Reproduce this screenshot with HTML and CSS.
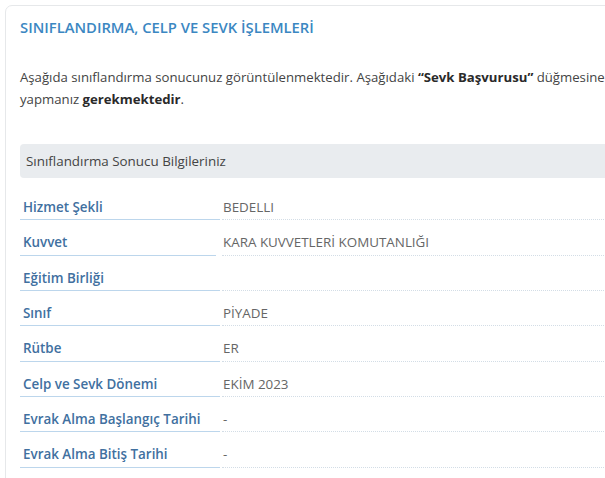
FILE: index.html
```html
<!DOCTYPE html>
<html lang="tr">
<head>
    <meta charset="UTF-8">
    <meta name="viewport" content="width=device-width, initial-scale=1.0">
    <title>Sınıflandırma, Celp ve Sevk İşlemleri</title>
    <link rel="stylesheet" href="styles.css">
</head>
<body>

    <div class="page">
        <div class="card">
            <h1 class="card-title">SINIFLANDIRMA, CELP VE SEVK İŞLEMLERİ</h1>

            <!-- Bilgilendirme metni -->
            <p class="info">
                Aşağıda sınıflandırma sonucunuz görüntülenmektedir. Aşağıdaki <strong>“Sevk Başvurusu”</strong> düğmesine tıklayarak sevk başvurunuzu<br>
                yapmanız <strong>gerekmektedir</strong>.
            </p>

            <div class="section-head">Sınıflandırma Sonucu Bilgileriniz</div>

            <!-- Sonuç tablosu -->
            <div class="result">
                <div class="label">Hizmet Şekli</div>
                <div class="value">BEDELLI</div>

                <div class="label short">Kuvvet</div>
                <div class="value">KARA KUVVETLERİ KOMUTANLIĞI</div>

                <div class="label">Eğitim Birliği</div>
                <div class="value"></div>

                <div class="label">Sınıf</div>
                <div class="value">PİYADE</div>

                <div class="label">Rütbe</div>
                <div class="value">ER</div>

                <div class="label">Celp ve Sevk Dönemi</div>
                <div class="value">EKİM 2023</div>

                <div class="label">Evrak Alma Başlangıç Tarihi</div>
                <div class="value">-</div>

                <div class="label">Evrak Alma Bitiş Tarihi</div>
                <div class="value">-</div>
            </div>
        </div>
    </div>

</body>
</html>
```

FILE: styles.css
```css
body {
    font-family: "Open Sans", Arial, sans-serif;
    background-color: #fff;
    margin: 0;
    padding: 0;
    overflow: hidden;
}

.page {
    padding: 5px 0 0 5px;
}

/* Kart utama */
.card {
    width: 900px;
    height: 600px;
    border: 1px solid #e6e8ea;
    border-radius: 7px;
    padding: 11px 14px 0 14px;
}

.card-title {
    margin: 0;
    font-size: 14.8px;
    line-height: 20px;
    font-weight: 600;
    color: #3b87c2;
}

.info {
    margin: 29px 0 34px 0;
    font-size: 13.2px;
    line-height: 22px;
    color: #444;
}

.info strong {
    font-weight: 700;
    color: #2a2a2a;
}

.section-head {
    height: 34px;
    line-height: 34px;
    padding-left: 6px;
    background-color: #e9ecef;
    border-radius: 4px;
    font-size: 13.4px;
    color: #444;
    margin-bottom: 7px;
}

/* Tabel hasil */
.result {
    display: grid;
    grid-template-columns: 200px 1fr;
    column-gap: 2px;
}

.label, .value {
    box-sizing: border-box;
    height: 35.33px;
    padding-top: 12px;
    line-height: 20px;
    font-size: 13.4px;
}

.label {
    padding-left: 3px;
    font-weight: 600;
    color: #41709f;
    border-bottom: 1px solid #bcd6ec;
}

.label.short {
    margin-right: 4px;
}

.value {
    padding-left: 1px;
    color: #666;
    border-bottom: 1px dotted #d3dde6;
}
```
